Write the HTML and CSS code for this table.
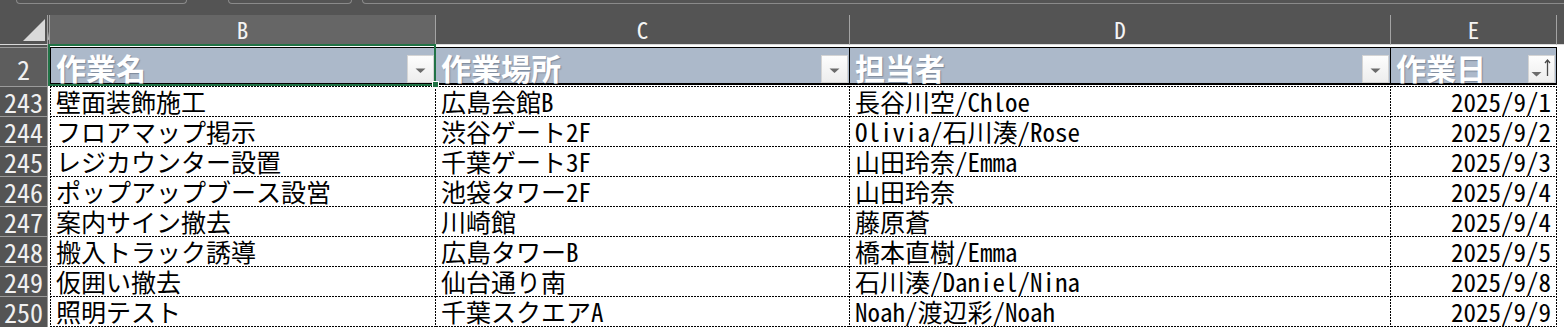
FILE: index.html
```html
<!DOCTYPE html>
<html lang="ja">
<head>
<meta charset="utf-8">
<title>作業一覧</title>
<link rel="stylesheet" href="styles.css">
</head>
<body>
<div class="fbar">
  <span class="fbox fbox-name"></span>
  <span class="fbox fbox-mid"></span>
  <span class="fbox fbox-formula"></span>
</div>
<div class="sheet">
  <div class="row">
    <div class="ch corner"><svg class="tri" width="22" height="22" viewBox="0 0 22 22"><polygon points="0,22 22,22 22,0" fill="#d9d9d9"/></svg></div>
    <div class="ch col-a"><svg width="2" height="29" viewBox="0 0 2 29"><line x1="0.3" y1="25" x2="1.7" y2="15" stroke="#cfcfcf" stroke-width="0.8"/></svg></div>
    <div class="ch ch-sel">B</div>
    <div class="ch">C</div>
    <div class="ch">D</div>
    <div class="ch">E</div>
    <div class="ch ch-rest"></div>
  </div>
  <div class="row">
    <div class="rh rh-thin"></div>
    <div class="blank"></div><div class="blank"></div><div class="blank"></div><div class="blank"></div><div class="blank"></div><div class="blank"></div>
  </div>
  <div class="row">
    <div class="rh rh-head">2</div>
    <div class="blank"></div>
    <div class="thw"><div class="th th-first"><span class="tht">作業名</span><span class="fbtn"><svg width="25" height="26" viewBox="0 0 25 26"><polygon points="7.5,12.5 17.5,12.5 12.5,17" fill="#6b6b6b"/></svg></span></div></div>
    <div class="thw"><div class="th"><span class="tht">作業場所</span><span class="fbtn"><svg width="25" height="26" viewBox="0 0 25 26"><polygon points="7.5,12.5 17.5,12.5 12.5,17" fill="#6b6b6b"/></svg></span></div></div>
    <div class="thw"><div class="th"><span class="tht">担当者</span><span class="fbtn"><svg width="25" height="26" viewBox="0 0 25 26"><polygon points="7.5,12.5 17.5,12.5 12.5,17" fill="#6b6b6b"/></svg></span></div></div>
    <div class="thw"><div class="th"><span class="tht">作業日</span><span class="fbtn"><svg width="25" height="26" viewBox="0 0 25 26"><polygon points="2.5,16 12.5,16 7.5,20.5" fill="#6b6b6b"/><line x1="18.5" y1="4" x2="18.5" y2="20" stroke="#4a4a4a" stroke-width="1.3"/><polyline points="16,7 18.5,4 21,7" fill="none" stroke="#4a4a4a" stroke-width="1.3"/></svg></span></div></div>
    <div class="blank"></div>
  </div>

  <div class="row">
    <div class="rh">243</div><div class="blank"></div>
    <div class="td td-first">壁面装飾施工</div><div class="td">広島会館B</div><div class="td">長谷川空/Chloe</div><div class="td td-date">2025/9/1</div><div class="blank"></div>
  </div>
  <div class="row">
    <div class="rh">244</div><div class="blank"></div>
    <div class="td td-first">フロアマップ掲示</div><div class="td">渋谷ゲート2F</div><div class="td">Olivia/石川湊/Rose</div><div class="td td-date">2025/9/2</div><div class="blank"></div>
  </div>
  <div class="row">
    <div class="rh">245</div><div class="blank"></div>
    <div class="td td-first">レジカウンター設置</div><div class="td">千葉ゲート3F</div><div class="td">山田玲奈/Emma</div><div class="td td-date">2025/9/3</div><div class="blank"></div>
  </div>
  <div class="row">
    <div class="rh">246</div><div class="blank"></div>
    <div class="td td-first">ポップアップブース設営</div><div class="td">池袋タワー2F</div><div class="td">山田玲奈</div><div class="td td-date">2025/9/4</div><div class="blank"></div>
  </div>
  <div class="row">
    <div class="rh">247</div><div class="blank"></div>
    <div class="td td-first">案内サイン撤去</div><div class="td">川崎館</div><div class="td">藤原蒼</div><div class="td td-date">2025/9/4</div><div class="blank"></div>
  </div>
  <div class="row">
    <div class="rh">248</div><div class="blank"></div>
    <div class="td td-first">搬入トラック誘導</div><div class="td">広島タワーB</div><div class="td">橋本直樹/Emma</div><div class="td td-date">2025/9/5</div><div class="blank"></div>
  </div>
  <div class="row">
    <div class="rh">249</div><div class="blank"></div>
    <div class="td td-first">仮囲い撤去</div><div class="td">仙台通り南</div><div class="td">石川湊/Daniel/Nina</div><div class="td td-date">2025/9/8</div><div class="blank"></div>
  </div>
  <div class="row row-last">
    <div class="rh">250</div><div class="blank"></div>
    <div class="td td-first">照明テスト</div><div class="td">千葉スクエアA</div><div class="td">Noah/渡辺彩/Noah</div><div class="td td-date">2025/9/9</div><div class="blank"></div>
  </div>

  <div class="selection"><span class="handle"></span></div>
</div>
</body>
</html>
```

FILE: styles.css
```css
* { box-sizing: border-box; margin: 0; padding: 0; }
html, body { width: 1564px; height: 327px; overflow: hidden; }
body {
  background: #545454;
  font-family: "Noto Sans Mono CJK JP", "Noto Sans CJK JP", "DejaVu Sans Mono", monospace;
  color: #000;
}

/* formula bar remnants */
.fbar { height: 15px; display: flex; padding-left: 16px; overflow: hidden; }
.fbox {
  display: block;
  height: 4px;
  border: 1px solid #8a8a8a;
  border-top: 0;
  border-radius: 0 0 6px 6px;
}
.fbox-name { width: 171px; }
.fbox-mid { width: 124px; margin-left: 41px; }
.fbox-formula { flex: 1; margin-left: 10px; margin-right: -20px; }

/* sheet grid */
.sheet {
  position: relative;
  display: grid;
  grid-template-columns: 48px 2px 386px 414px 541px 166px 7px;
  grid-template-rows: 30px 2px 39px repeat(7, 30px) 31px;
}
.row { display: contents; }

/* column headers */
.ch {
  background: #545454;
  color: #f4f4f4;
  font-size: 23px;
  line-height: 29px;
  text-align: center;
  border-right: 1px solid #a3a3a3;
  border-bottom: 1px solid #d9d9d9;
}
.ch-sel { background: #666666; }
.ch-rest { border-right: 0; }
.corner {
  display: flex;
  justify-content: flex-end;
  align-items: flex-end;
  padding: 0 2px 3px 0;
}
.tri { display: block; }
.col-a { overflow: hidden; border-right: 1px solid #a3a3a3; }
.col-a svg { display: block; }

/* row headers */
.rh {
  background: #545454;
  color: #f0f0f0;
  font-size: 26px;
  line-height: 29px;
  text-align: center;
  border-top: 1px solid #9b9b9b;
  border-right: 1px solid #9b9b9b;
}
.rh-thin { border-top: 0; }
.rh-head { background: #5d5d5d; padding-top: 3px; line-height: 35px; }

.blank { background: #fff; }

/* table header */
.thw { background: #fff; }
.th {
  height: 38px;
  background: #acb9ca;
  border-top: 1px solid #000;
  border-bottom: 2px solid #000;
  border-right: 1px solid #000;
  display: flex;
  align-items: flex-end;
  justify-content: space-between;
  padding-left: 5px;
}
.th-first { border-left: 1px solid #000; }
.tht {
  font-family: "Noto Sans CJK JP", sans-serif;
  font-weight: 700;
  font-size: 30px;
  line-height: 32px;
  color: #fff;
  text-shadow: 1px 1px 1px rgba(40, 50, 70, 0.35);
}
.fbtn {
  width: 27px;
  height: 28px;
  margin-right: 1px;
  background: linear-gradient(#fdfdfd, #ededed);
  border: 1px solid #d4d4d4;
  display: block;
}
.fbtn svg { display: block; }

/* data cells */
.td {
  background-color: #fff;
  background-image:
    repeating-linear-gradient(to right, #000 0 2px, transparent 2px 3px),
    repeating-linear-gradient(to bottom, #000 0 2px, transparent 2px 3px);
  background-size: 100% 1px, 1px 100%;
  background-position: left top, right top;
  background-repeat: no-repeat;
  font-size: 25px;
  line-height: 30px;
  padding-left: 5px;
  white-space: nowrap;
}
.td-first {
  background-image:
    repeating-linear-gradient(to right, #000 0 2px, transparent 2px 3px),
    repeating-linear-gradient(to bottom, #000 0 2px, transparent 2px 3px),
    repeating-linear-gradient(to bottom, #000 0 2px, transparent 2px 3px);
  background-size: 100% 1px, 1px 100%, 1px 100%;
  background-position: left top, right top, left top;
  padding-left: 6px;
}
.td-date { text-align: right; padding-right: 6px; padding-left: 0; }
.row-last .td {
  background-image:
    repeating-linear-gradient(to right, #000 0 2px, transparent 2px 3px),
    repeating-linear-gradient(to right, #000 0 2px, transparent 2px 3px),
    repeating-linear-gradient(to bottom, #000 0 2px, transparent 2px 3px);
  background-size: 100% 1px, 100% 1px, 1px 100%;
  background-position: left top, left bottom, right top;
}
.row-last .td-first {
  background-image:
    repeating-linear-gradient(to right, #000 0 2px, transparent 2px 3px),
    repeating-linear-gradient(to right, #000 0 2px, transparent 2px 3px),
    repeating-linear-gradient(to bottom, #000 0 2px, transparent 2px 3px),
    repeating-linear-gradient(to bottom, #000 0 2px, transparent 2px 3px);
  background-size: 100% 1px, 100% 1px, 1px 100%, 1px 100%;
  background-position: left top, left bottom, right top, left top;
}

/* active cell selection (overlay) */
.selection {
  position: absolute;
  left: 48px;
  top: 29px;
  width: 388px;
  height: 42px;
  border: 2px solid #217346;
  pointer-events: none;
}
.handle {
  position: absolute;
  right: -5px;
  bottom: -4px;
  width: 7px;
  height: 7px;
  background: #217346;
  border: 1px solid #fff;
}
```
